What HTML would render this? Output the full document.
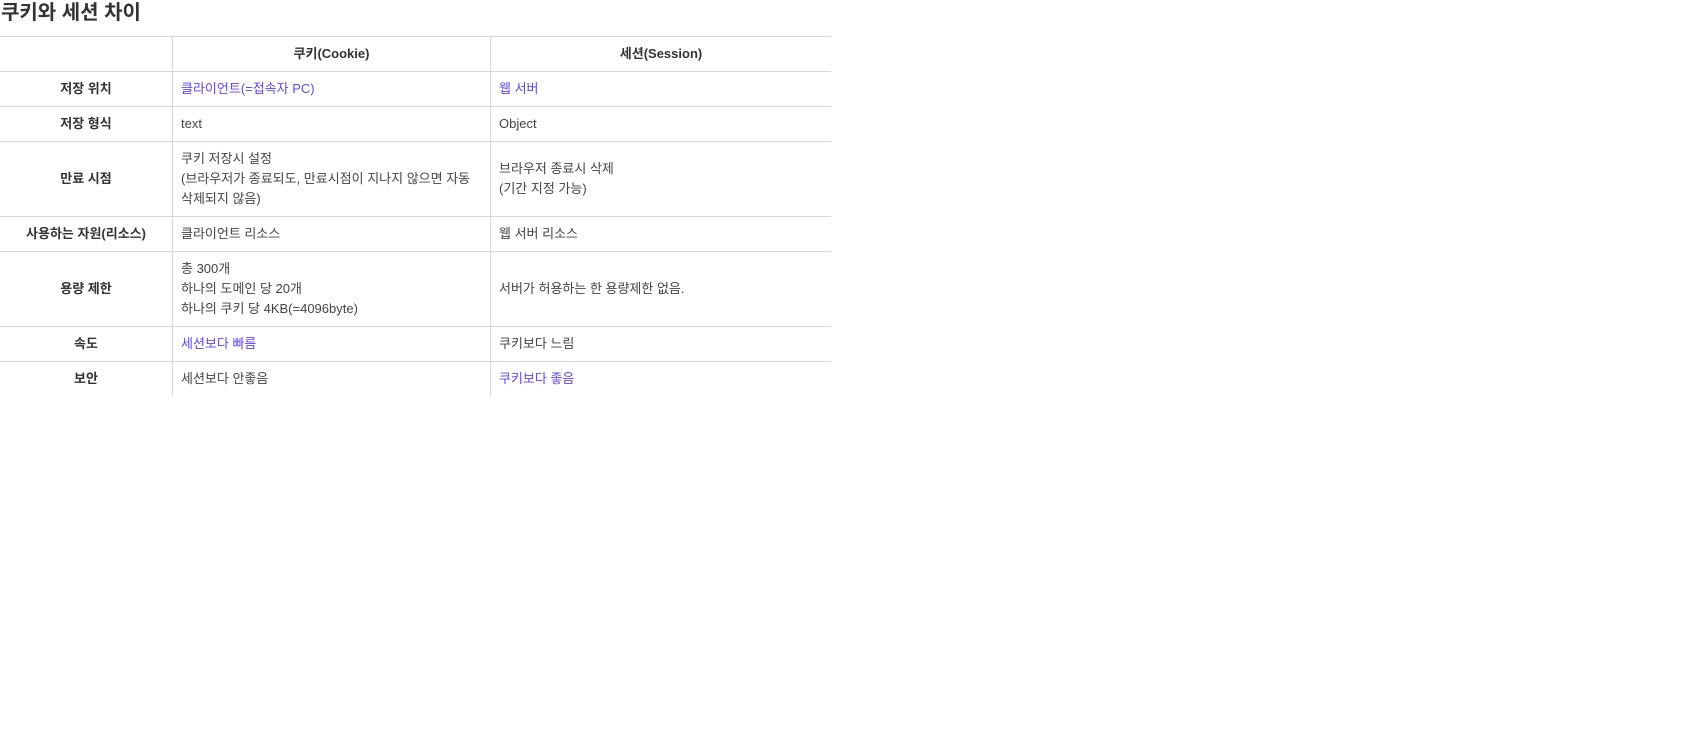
<!DOCTYPE html>
<html><head><meta charset="utf-8"><style>
body{margin:0;background:#fff;font-family:"Liberation Sans","Noto Sans CJK KR",sans-serif;color:#444;}
h2{margin:0;height:36px;font-size:20px;font-weight:bold;line-height:27px;color:#333;padding-left:1px;}
table{border-collapse:collapse;width:831px;font-size:13px;line-height:20px;}
td{border-top:1px solid #d6d6d6;border-left:1px solid #d6d6d6;padding:7px 8px 7px;vertical-align:middle;}
td:first-child{border-left:none;text-align:center;font-weight:bold;width:156px;color:#333;}
tr td:nth-child(2){width:301px;}
.h td{text-align:center;font-weight:bold;color:#333;}
.p{color:#6246ea;}
</style></head><body>
<h2>쿠키와 세션 차이</h2>
<table>
<tr class="h"><td></td><td>쿠키(Cookie)</td><td>세션(Session)</td></tr>
<tr><td>저장 위치</td><td class="p">클라이언트(=접속자 PC)</td><td class="p">웹 서버</td></tr>
<tr><td>저장 형식</td><td>text</td><td>Object</td></tr>
<tr><td>만료 시점</td><td>쿠키 저장시 설정<br>(브라우저가 종료되도, 만료시점이 지나지 않으면 자동 삭제되지 않음)</td><td>브라우저 종료시 삭제<br>(기간 지정 가능)</td></tr>
<tr><td>사용하는 자원(리소스)</td><td>클라이언트 리소스</td><td>웹 서버 리소스</td></tr>
<tr><td>용량 제한</td><td>총 300개<br>하나의 도메인 당 20개<br>하나의 쿠키 당 4KB(=4096byte)</td><td>서버가 허용하는 한 용량제한 없음.</td></tr>
<tr><td>속도</td><td class="p">세션보다 빠름</td><td>쿠키보다 느림</td></tr>
<tr><td>보안</td><td>세션보다 안좋음</td><td class="p">쿠키보다 좋음</td></tr>
</table>
</body></html>
